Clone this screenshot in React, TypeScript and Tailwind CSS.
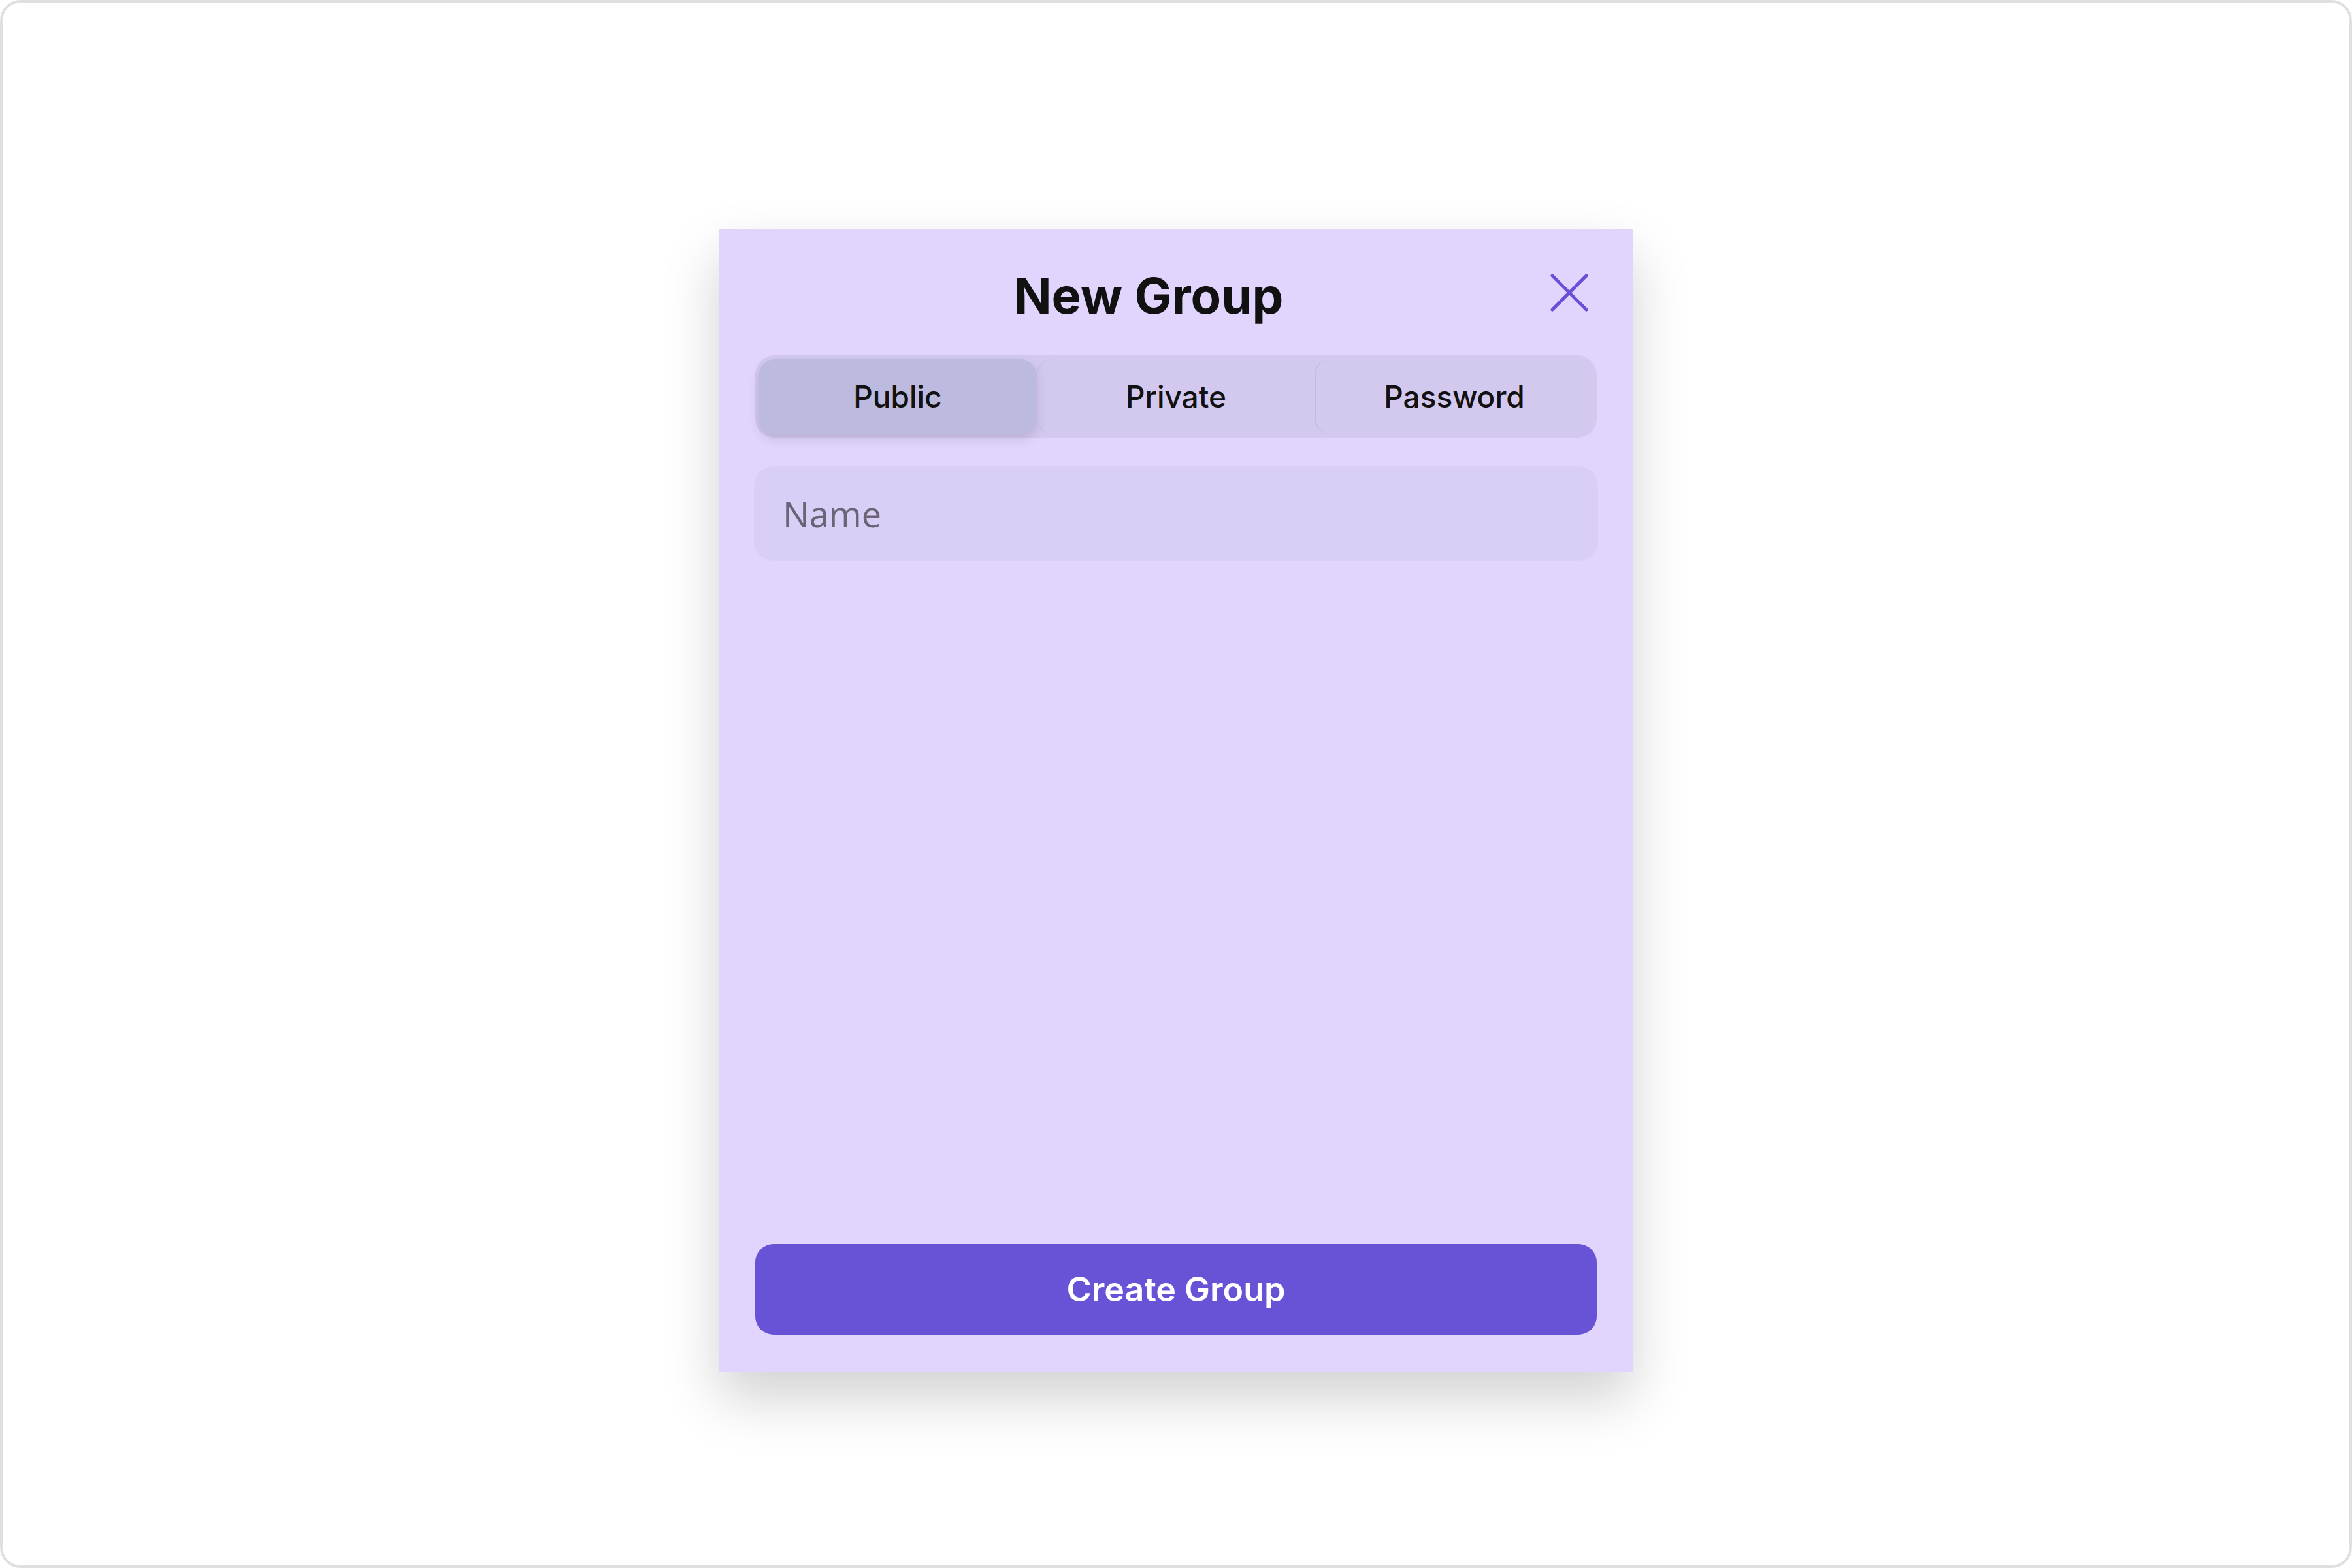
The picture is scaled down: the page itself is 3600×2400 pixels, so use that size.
import { useState } from "react";

const tabs = ["Public", "Private", "Password"];

export default function App() {
  const [active, setActive] = useState(0);

  return (
    <div className="w-[3600px] h-[2400px] bg-white border-[4px] border-[#e0e0e0] rounded-[32px] flex justify-center pt-[346px]" style={{ fontFamily: "Inter, 'Liberation Sans', sans-serif" }}>
      <div className="w-[1400px] h-[1750px] bg-[#e1d5fd] flex flex-col px-[56px] pt-[56px] pb-[57px] shadow-[0_40px_80px_rgba(0,0,0,0.18)]">
        <div className="flex items-start">
          <h1 className="flex-1 text-center text-[76px] font-bold text-[#111111] leading-[92px]">New Group</h1>
          <button className="w-[84px] h-[84px] flex items-center justify-center">
            <svg width="58" height="58" viewBox="0 0 58 58" fill="none" stroke="#6a4fd6" strokeWidth="5" strokeLinecap="round">
              <path d="M3 3 L55 55 M55 3 L3 55" />
            </svg>
          </button>
        </div>

        <div className="mt-[46px] h-[126px] bg-[#d3c8ee] rounded-[30px] p-[6px] flex">
          {tabs.map((t, i) => (
            <button
              key={t}
              onClick={() => setActive(i)}
              className={
                "flex-1 text-[46px] font-medium text-[#111111] rounded-[24px] " +
                (i === active ? "bg-[#bdbadf] shadow-[0_8px_18px_rgba(0,0,0,0.12)] " : "") +
                (i > 0 ? "border-l-[2px] border-[#c4b9e2]" : "")
              }
            >
              {t}
            </button>
          ))}
        </div>

        <input
          placeholder="Name"
          className="mt-[44px] -mx-[2px] h-[144px] bg-[#d9cef6] rounded-[30px] px-[44px] text-[54px] text-[#111] placeholder:text-[#6b6476] outline-none"
          style={{ fontFamily: "'Open Sans', 'Noto Sans', sans-serif" }}
        />

        <button className="mt-auto h-[139px] bg-[#6852d6] rounded-[28px] text-white text-[52px] font-semibold">
          Create Group
        </button>
      </div>
    </div>
  );
}
